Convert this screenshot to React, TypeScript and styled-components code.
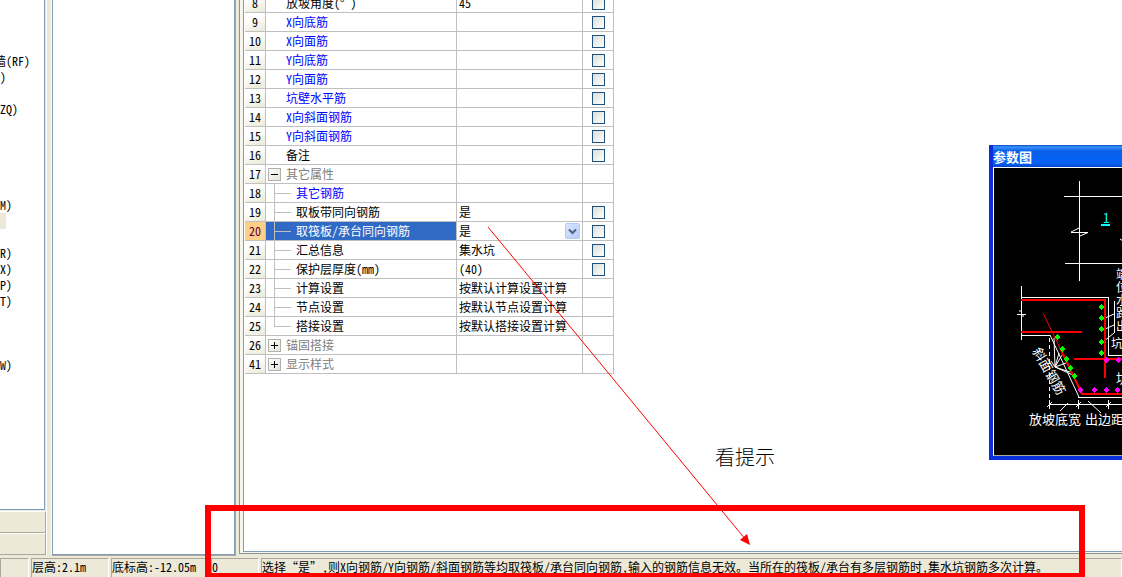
import React from "react";
import styled, { createGlobalStyle } from "styled-components";

const Global = createGlobalStyle`
  * { box-sizing: border-box; }
  html, body { margin: 0; padding: 0; }
  body {
    background: #ece9d8;
    color: #000;
    font: 12px/16px "Noto Sans CJK SC", "Liberation Sans", sans-serif;
    font-feature-settings: "hwid";
    overflow: hidden;
  }
`;

const Page = styled.div`
  position: relative;
  min-height: 100vh;
  display: grid;
  grid-template-rows: 1fr 20px;
  overflow: hidden;
`;

const Workspace = styled.main`
  display: grid;
  grid-template-columns: 47px 192px minmax(0, 1fr);
`;

const Sidebar = styled.aside`
  display: flex;
  flex-direction: column;
  border-right: 1px solid #fff;
  margin-bottom: 2px;
`;

const Tree = styled.ul`
  flex: 1;
  margin: 0 1px 1px 0;
  padding: 53px 0 0;
  list-style: none;
  background: #fff;
  border-right: 1px solid #7f9db9;
  border-bottom: 1px solid #7f9db9;
  overflow: hidden;
`;

const TreeItem = styled.li<{ $width: number }>`
  display: flex;
  justify-content: flex-end;
  width: ${(p) => p.$width}px;
  height: 16px;
  white-space: nowrap;
`;

const TreeSelection = styled(TreeItem)`
  background: #ece9d8;
`;

const Strip = styled.div`
  height: 22px;
  border-top: 1px solid #fff;
  border-bottom: 1px solid #aca899;
  border-right: 1px solid #aca899;
`;

const ListPane = styled.section`
  margin: 0 3px 1px 4px;
  border: solid;
  border-width: 0 1px 1px;
  border-color: #fff #aca899 #aca899 #fff;
  display: grid;
`;

const ListBody = styled.div`
  background: #fff;
  border: solid #7f9db9;
  border-width: 0 1px 1px;
`;

const PropertyPane = styled.section`
  border: solid #8a9690;
  border-width: 0 0 1px 1px;
  background: #f6f5ee;
  padding: 0 0 1px 3px;
  margin-bottom: 3px;
  display: grid;
`;

const PropertyBody = styled.div`
  background: #fff;
  border: solid #7f9db9;
  border-width: 0 0 1px 1px;
  padding-left: 1px;
  overflow: hidden;
`;

const Table = styled.table`
  margin-top: -6px;
  width: 369px;
  table-layout: fixed;
  border-collapse: separate;
  border-spacing: 0;
`;

const Cell = styled.td`
  height: 19px;
  padding: 0 2px;
  border: solid #c0c0c0;
  border-width: 0 1px 1px 0;
  line-height: 16px;
  white-space: nowrap;
  overflow: hidden;
`;

const RowNumber = styled.th<{ $active?: boolean }>`
  height: 19px;
  padding: 0;
  border: solid #c0c0c0;
  border-width: 0 1px 1px 0;
  font-weight: 400;
  line-height: 16px;
  text-align: center;
  color: ${(p) => (p.$active ? "#600040" : "#000")};
  background: ${(p) => (p.$active ? "#ffcf87" : "linear-gradient(160deg, #fff 30%, #ece9d8)")};
`;

type Tone = "plain" | "link" | "group";
const toneColor: Record<Tone, string> = { plain: "#000", link: "#0000ff", group: "#808080" };

const NameCell = styled(Cell)<{ $tone: Tone; $active?: boolean }>`
  padding: 0;
  color: ${(p) => (p.$active ? "#fff" : toneColor[p.$tone])};
  background: ${(p) => (p.$active ? "#316ac5" : "#fff")};
`;

const NameRow = styled.div`
  display: flex;
  align-items: center;
  height: 18px;
`;

const Gutter = styled.span<{ $wide?: boolean }>`
  flex: none;
  display: flex;
  align-items: center;
  width: ${(p) => (p.$wide ? 30 : 20)}px;
  height: 18px;
  padding-left: 2px;
`;

const Toggle = styled.button`
  width: 13px;
  height: 13px;
  padding: 0;
  display: grid;
  place-items: center;
  border: 1px solid #b0b0b0;
  background: linear-gradient(135deg, #fff, #e4e2da);
`;

const ValueRow = styled.div`
  display: flex;
  align-items: center;
  justify-content: space-between;
  height: 18px;
`;

const Combo = styled.select`
  appearance: none;
  flex: 1;
  height: 16px;
  margin: 0;
  padding: 0;
  border: 0;
  outline: 0;
  color: #000;
  font: inherit;
  font-feature-settings: inherit;
  background: transparent;
`;

const DropButton = styled.button`
  width: 15px;
  height: 16px;
  padding: 0;
  display: grid;
  place-items: center;
  border: 1px solid #b4c8f6;
  border-radius: 2px;
  background: linear-gradient(135deg, #dce6fe, #b6cbf8);
`;

const CheckCell = styled(Cell)`
  padding: 0;
`;

const Check = styled.input`
  appearance: none;
  display: block;
  width: 13px;
  height: 13px;
  margin: 0 auto;
  border: 1px solid #1c5180;
  background: linear-gradient(135deg, #dcdcd7, #fff);
`;

const StatusBar = styled.footer`
  display: grid;
  grid-template-columns: 29px 78px 98px 48px minmax(0, 1fr);
  column-gap: 2px;
  padding-top: 1px;
  overflow: hidden;
`;

const StatusCell = styled.div`
  border: solid;
  border-width: 1px 1px 0;
  border-color: #aca899 #fff #aca899 #aca899;
  white-space: nowrap;
`;

const HighlightBox = styled.div`
  position: absolute;
  left: 205px;
  right: 37px;
  bottom: 0;
  height: 72px;
  border: 6px solid #ff0000;
  border-bottom-width: 4px;
  pointer-events: none;
`;

const Arrow = styled.svg`
  position: absolute;
  left: 480px;
  top: 220px;
  pointer-events: none;
`;

const Note = styled.p`
  position: absolute;
  left: 715px;
  top: 444px;
  margin: 0;
  color: #000;
  font-size: 20px;
  line-height: 26px;
  font-weight: 300;
`;

const FloatWindow = styled.section`
  position: absolute;
  right: 0;
  top: 145px;
  width: 133px;
  border: solid #0831d9;
  border-width: 0 0 4px 4px;
  overflow: hidden;
  background: #0855dd;
`;

const TitleBar = styled.h2`
  margin: 0 0 0 -4px;
  height: 22px;
  padding: 3px 0 0 4px;
  color: #fff;
  font-size: 13px;
  line-height: 18px;
  font-weight: 700;
  background: linear-gradient(#0a4ac0, #3a93ff 2px, #0a5fe8 6px, #0462f5 14px, #0560f0 19px, #0444c8);
`;

const Drawing = styled.svg`
  display: block;
  background: #000;
  border: solid;
  border-width: 1px 0 1px 1px;
  border-color: #fff #fff #aca899 #fff;
`;

interface Row {
  no: number;
  name: string;
  tone?: Tone;
  value?: string;
  check?: boolean;
  toggle?: "open" | "closed";
  child?: boolean;
  last?: boolean;
  active?: boolean;
}

const rows: Row[] = [
  { no: 8, name: "放坡角度(° )", value: "45", check: true },
  { no: 9, name: "X向底筋", tone: "link", check: true },
  { no: 10, name: "X向面筋", tone: "link", check: true },
  { no: 11, name: "Y向底筋", tone: "link", check: true },
  { no: 12, name: "Y向面筋", tone: "link", check: true },
  { no: 13, name: "坑壁水平筋", tone: "link", check: true },
  { no: 14, name: "X向斜面钢筋", tone: "link", check: true },
  { no: 15, name: "Y向斜面钢筋", tone: "link", check: true },
  { no: 16, name: "备注", check: true },
  { no: 17, name: "其它属性", tone: "group", toggle: "open" },
  { no: 18, name: "其它钢筋", tone: "link", child: true },
  { no: 19, name: "取板带同向钢筋", value: "是", check: true, child: true },
  { no: 20, name: "取筏板/承台同向钢筋", value: "是", check: true, child: true, active: true },
  { no: 21, name: "汇总信息", value: "集水坑", check: true, child: true },
  { no: 22, name: "保护层厚度(mm)", value: "(40)", check: true, child: true },
  { no: 23, name: "计算设置", value: "按默认计算设置计算", child: true },
  { no: 24, name: "节点设置", value: "按默认节点设置计算", child: true },
  { no: 25, name: "搭接设置", value: "按默认搭接设置计算", child: true, last: true },
  { no: 26, name: "锚固搭接", tone: "group", toggle: "closed" },
  { no: 41, name: "显示样式", tone: "group", toggle: "closed" },
];

const treeItems: { text: string; width: number; selected?: boolean }[] = [
  { text: "墙(RF)", width: 30 },
  { text: ")", width: 6 },
  { text: "", width: 6 },
  { text: "(ZQ)", width: 18 },
  { text: "", width: 6 },
  { text: "", width: 6 },
  { text: "", width: 6 },
  { text: "", width: 6 },
  { text: "", width: 6 },
  { text: "(M)", width: 12 },
  { text: "", width: 6, selected: true },
  { text: "", width: 6 },
  { text: "(R)", width: 12 },
  { text: "(X)", width: 12 },
  { text: "(P)", width: 12 },
  { text: "(T)", width: 12 },
  { text: "", width: 6 },
  { text: "", width: 6 },
  { text: "", width: 6 },
  { text: "(W)", width: 12 },
];

function PropertyRow({ row }: { row: Row }) {
  return (
    <tr>
      <RowNumber scope="row" $active={row.active}>{row.no}</RowNumber>
      <NameCell $tone={row.tone ?? "plain"} $active={row.active}>
        <NameRow>
          <Gutter $wide={row.child}>
            {row.toggle && (
              <Toggle aria-label={row.name}>
                <svg width="7" height="7" shapeRendering="crispEdges">
                  <path d={row.toggle === "open" ? "M0 3h7v1h-7z" : "M0 3h7v1h-7zM3 0h1v7h-1z"} fill="#000" />
                </svg>
              </Toggle>
            )}
            {row.child && (
              <svg width="24" height="18" overflow="visible" shapeRendering="crispEdges">
                <path d={row.last ? "M6.5 -1V9.5H23" : "M6.5 -1V18M6.5 9.5H23"} fill="none" stroke="#c0c0c0" />
              </svg>
            )}
          </Gutter>
          {row.name}
        </NameRow>
      </NameCell>
      <Cell>
        {row.active ? (
          <ValueRow>
            <Combo aria-label={row.name} defaultValue="是">
              <option>是</option>
              <option>否</option>
            </Combo>
            <DropButton aria-label="展开">
              <svg width="9" height="7">
                <path d="M1 1.5L4.5 5L8 1.5" fill="none" stroke="#4d6185" strokeWidth="2" />
              </svg>
            </DropButton>
          </ValueRow>
        ) : (
          row.value
        )}
      </Cell>
      <CheckCell>{row.check && <Check type="checkbox" aria-label={row.name} />}</CheckCell>
    </tr>
  );
}

const greenDots = [[107, 139], [107, 150], [107, 161], [107, 174], [107, 185], [63, 169], [68, 181], [72, 191], [76, 200], [80, 208]];
const pinkDots = [[112, 192], [124, 192], [86, 222], [100, 222], [112, 222], [123, 222]];

function Dot({ x, y, color }: { x: number; y: number; color: string }) {
  return (
    <path
      d={`M${x - 2} ${y - 1}h1v-1h1v-1h1v1h1v1h1v2h-1v1h-1v1h-1v-1h-1v-1h-1z`}
      fill={color}
      shapeRendering="crispEdges"
    />
  );
}

function SectionDrawing() {
  return (
    <Drawing width="129" height="289" viewBox="0 0 128 287">
      <g fill="none" stroke="#fff" shapeRendering="crispEdges">
        <path d="M85.5 13V113M70 28.5H128M71 95.5H128M77 64.5H94M27.5 118V172M23 146.5H32" />
        <path d="M27 129.5H114.5V187.5H128M27 167.5H56M84 229.5H128M120.5 133V165" />
        <path d="M55.5 170V232" strokeDasharray="4 3" />
        <path d="M55 236.5H128M55.5 232V241M84.5 232V241M114.5 232V241" />
      </g>
      <g fill="none" stroke="#fff">
        <path d="M77 64L85 60M86 68L94 64.5M126 71l3 2M26 144v-2M29 147v2" />
        <path d="M109 151L120 146M109 162L120 157M109 174L120 165" />
        <path d="M56 167L85 229M60 170L61 199M65 185L61 199M68 187L61 199L72 195M61 199L76 204M61 199L79 207M57 193L61 199" />
        <path d="M53 239l5-5M82 239l5-5M112 239l5-5M66 243l8-8M94 233l13 12" />
      </g>
      <g stroke="#ff0000" fill="none">
        <path d="M27 132H111V210M27 164H88M80 191H128M66 180L88 226H128" strokeWidth="2" />
        <path d="M49 145L66 180" />
      </g>
      {greenDots.map(([x, y]) => <Dot key={`${x}-${y}`} x={x} y={y} color="#00ff00" />)}
      {pinkDots.map(([x, y]) => <Dot key={`${x}-${y}`} x={x} y={y} color="#ff00ff" />)}
      <g fill="#fff" fontSize="13">
        <text x="35" y="256">放坡底宽</text>
        <text x="91" y="256">出边距</text>
        <text x="0" y="0" transform="translate(38 183) rotate(60)">斜面钢筋</text>
        <text x="122" y="215">坑</text>
      </g>
      <g fill="#fff" fontSize="12">
        <text x="122" y="111">端</text>
        <text x="122" y="124">位</text>
        <text x="122" y="137">水</text>
        <text x="122" y="150">路</text>
        <text x="122" y="163">出</text>
        <text x="117" y="180">坑</text>
      </g>
      <text x="109" y="55" fill="#00ffff" fontSize="13">1</text>
      <path d="M107 56h9v2h-9z" fill="#00ffff" />
    </Drawing>
  );
}

export default function App() {
  return (
    <>
      <Global />
      <Page>
        <Workspace>
          <Sidebar>
            <Tree>
              {treeItems.map((item, i) =>
                item.selected ? (
                  <TreeSelection key={i} $width={item.width} />
                ) : (
                  <TreeItem key={i} $width={item.width}>{item.text}</TreeItem>
                ),
              )}
            </Tree>
            <Strip />
            <Strip />
          </Sidebar>
          <ListPane>
            <ListBody />
          </ListPane>
          <PropertyPane>
            <PropertyBody>
              <Table>
                <colgroup>
                  <col width="21" />
                  <col width="191" />
                  <col width="126" />
                  <col width="31" />
                </colgroup>
                <tbody>
                  {rows.map((row) => <PropertyRow key={row.no} row={row} />)}
                </tbody>
              </Table>
            </PropertyBody>
          </PropertyPane>
        </Workspace>
        <StatusBar>
          <StatusCell />
          <StatusCell>层高:2.1m</StatusCell>
          <StatusCell>底标高:-12.05m</StatusCell>
          <StatusCell>0</StatusCell>
          <StatusCell>
            选择“是”,则X向钢筋/Y向钢筋/斜面钢筋等均取筏板/承台同向钢筋,输入的钢筋信息无效。当所在的筏板/承台有多层钢筋时,集水坑钢筋多次计算。
          </StatusCell>
        </StatusBar>
        <FloatWindow>
          <TitleBar>参数图</TitleBar>
          <SectionDrawing />
        </FloatWindow>
        <Note>看提示</Note>
        <HighlightBox />
        <Arrow width="280" height="330">
          <path d="M8 7L266 320" stroke="#ff0000" fill="none" />
          <path d="M270 325L260 320L267 314z" fill="#ff0000" />
        </Arrow>
      </Page>
    </>
  );
}
